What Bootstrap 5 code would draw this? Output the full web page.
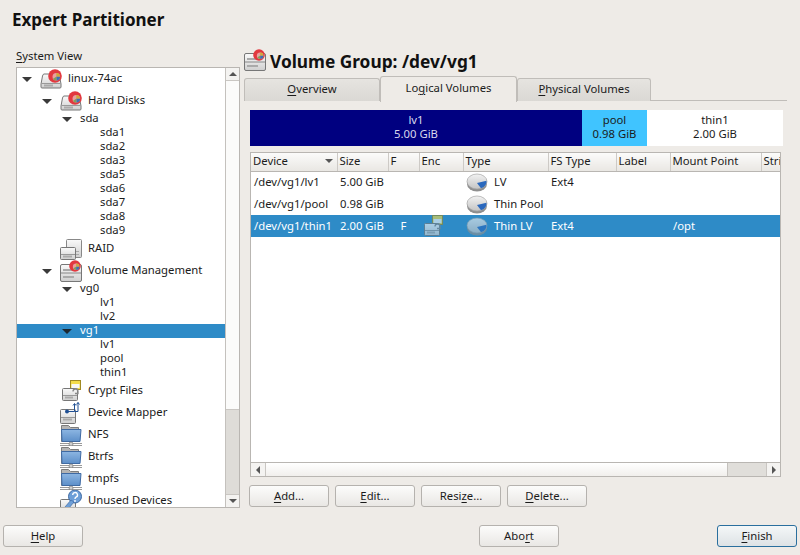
<!DOCTYPE html>
<html>

<head>
  <link href="https://cdn.jsdelivr.net/npm/bootstrap@5.3.2/dist/css/bootstrap.min.css" rel="stylesheet" type="text/css" />
  <style>
    html, body { height: 555px; overflow: hidden; }
    body { background: #eeebe7; color: #1b1b1b; font-family: "Noto Sans", "Liberation Sans", sans-serif; font-size: 11.3px; line-height: 14px; }
    u { text-underline-offset: 2px; text-decoration-thickness: 1px; }
    .page { height: 555px; }
    .app-title { font-size: 17px; font-weight: 700; line-height: 20px; color: #111; padding: 10px 0 0 12px; height: 47px; }
    .work { height: 471px; padding-left: 16px; gap: 4px; }
    .left-side { width: 224px; }
    .view-label { height: 20px; padding-top: 2px; }
    .tree-box { height: 441px; background: #fff; border: 1px solid #b9b6b2; overflow: hidden; }
    .tree-list { flex: 1; overflow: hidden; }
    .t-row { display: flex; align-items: center; flex-shrink: 0; }
    .t-label { margin-bottom: 2px; }
    .t-text { height: 14px; }
    .t-icon { height: 22px; }
    .t-sel { background: #2e8bc7; color: #fff; }
    .l0 { padding-left: 3px; }
    .l1 { padding-left: 23px; }
    .l2 { padding-left: 43px; }
    .l3 { padding-left: 83px; }
    .slot { width: 20px; flex-shrink: 0; padding-left: 2px; }
    .tri { display: block; width: 0; height: 0; border-left: 5px solid transparent; border-right: 5px solid transparent; border-top: 5px solid #3a3a3a; }
    .t-sel .tri { border-top-color: #1c2730; }
    .ico { width: 22px; height: 22px; flex-shrink: 0; margin-right: 6px; overflow: visible; }
    .v-bar { width: 14px; border-left: 1px solid #c4c1bd; background: #dedcd8; }
    .bar-btn { height: 13px; background: #f4f3f1; display: flex; align-items: center; justify-content: center; border-bottom: 1px solid #c9c6c2; }
    .bar-btn-b { border-bottom: 0; border-top: 1px solid #c9c6c2; }
    .v-thumb { height: 329px; background: #fbfbfa; border-bottom: 1px solid #c9c6c2; }
    .tri-up { width: 0; height: 0; border-left: 4px solid transparent; border-right: 4px solid transparent; border-bottom: 4px solid #555; }
    .tri-down { width: 0; height: 0; border-left: 4px solid transparent; border-right: 4px solid transparent; border-top: 4px solid #555; }
    .tri-left { width: 0; height: 0; border-top: 4px solid transparent; border-bottom: 4px solid transparent; border-right: 4px solid #555; }
    .tri-right { width: 0; height: 0; border-top: 4px solid transparent; border-bottom: 4px solid transparent; border-left: 4px solid #555; }
    .right-side { width: 543px; }
    .vg-head { height: 29px; }
    .vg-icon { width: 22px; height: 22px; margin: 0 4px 3px 0; overflow: visible; }
    .vg-title { font-size: 17.300px; font-weight: 700; line-height: 22px; color: #111; }
    .tab-strip { height: 25px; border-bottom: 1px solid #c0bdb9; align-items: flex-end; --bs-nav-tabs-border-width: 0; }
    .tab-strip .nav-link { display: block; height: 23px; margin-bottom: 0; padding: 3px 0 0; text-align: center; color: #1b1b1b; font-size: 11.3px; line-height: 14px; background: linear-gradient(#e6e4e0, #dad8d4); border: 1px solid #c0bdb9; border-bottom: 0; border-left-width: 1px; border-radius: 3px 3px 0 0; }
    .tab-strip .nav-link.active { height: 26px; margin-bottom: -1px; padding-top: 4px; background: #eeebe7; color: #1b1b1b; border: 1px solid #c0bdb9; border-bottom: 0; }
    .tw1 { width: 136px; }
    .tw2 { width: 137px; }
    .tw3 { width: 134px; }
    .size-map { height: 36px; margin: 9px 4px 0 6px; width: 533px; text-align: center; }
    .seg-lv1 { width: 332px; background: #000080; color: #d9d9ec; }
    .seg-pool { width: 65px; background: #40c4ff; }
    .seg-thin { width: 136px; background: #fff; }
    .seg-in { padding-top: 3px; }
    .list-frame { width: 531px; height: 325px; margin: 6px 0 0 6px; background: #fff; border: 1px solid #b9b6b2; }
    .list-scroll { flex: 1; overflow: hidden; }
    .vol-table { width: 620px; table-layout: fixed; margin: 0; --bs-table-bg: transparent; --bs-table-color: #1b1b1b; font-size: 11.3px; }
    .vol-table > thead > tr > th { height: 18px; padding: 0 0 1px 2px; font-weight: 400; line-height: 14px; vertical-align: middle; background: linear-gradient(#fbfbfa, #e9e7e3); border-right: 1px solid #cdcac6; border-bottom: 1px solid #b9b6b2; box-shadow: none; }
    .vol-table > tbody > tr > td { height: 22px; padding: 0 0 1px 3px; vertical-align: middle; border: 0; white-space: nowrap; overflow: visible; box-shadow: none; }
    .vol-table > tbody > tr > td.cell-flag { padding: 0 0 1px; }
    .vol-table > tbody > tr.row-sel > td { background: #2e8bc7; color: #fff; }
    .row-sel svg { opacity: .62; }
    .sort-tri { width: 0; height: 0; border-left: 4px solid transparent; border-right: 4px solid transparent; border-top: 4px solid #555; margin-right: 4px; }
    .cell-ico { width: 22px; height: 22px; margin: -1px 6px -1px 0; flex-shrink: 0; overflow: visible; }
    .h-bar { height: 14px; border-top: 1px solid #b9b6b2; background: #e0deda; }
    .h-btn { width: 15px; background: #f4f3f1; display: flex; align-items: center; justify-content: center; }
    .h-btn-l { border-right: 1px solid #c9c6c2; }
    .h-btn-r { width: 14px; border-left: 1px solid #c9c6c2; }
    .h-thumb { width: 462px; background: linear-gradient(#fff, #f1efec); border-right: 1px solid #c4c1bd; }
    .act-row { margin: 8px 0 0 5px; gap: 6px; }
    .kde-btn { width: 80px; height: 22px; padding: 0 0 2px; font-size: 11.3px; line-height: 17px; color: #1b1b1b; background: linear-gradient(#fcfcfb, #e9e7e4); border: 1px solid #b5b2ae; border-radius: 3px; }
    .finish-btn { background: linear-gradient(#f4f7f8, #dde2e5); border-color: #2a6f9e; }
    .foot { height: 22px; margin-top: 7px; padding: 0 3px; }
    .abort-wrap { margin-right: 158px; }
  </style>
</head>

<body>
  <svg width="0" height="0" class="position-absolute">
    <defs>
      <linearGradient id="gDrive" x1="0" y1="0" x2="0" y2="1"><stop offset="0" stop-color="#fafafa" /><stop offset="1" stop-color="#cfcfcf" /></linearGradient>
      <linearGradient id="gFold" x1="0" y1="0" x2="0" y2="1"><stop offset="0" stop-color="#8db6e2" /><stop offset="1" stop-color="#5d8fc9" /></linearGradient>
      <linearGradient id="gPie" x1="0" y1="0" x2="0" y2="1"><stop offset="0" stop-color="#f2f2f2" /><stop offset="1" stop-color="#c4c4c4" /></linearGradient>
      <symbol id="badge" viewBox="0 0 14 14">
        <circle cx="7" cy="7" r="6.800" fill="#e2383f" />
        <circle cx="8.300" cy="7.800" r="3.800" fill="#e8a0a0" />
        <path d="M8.300 7.800V4a3.800 3.800 0 0 1 3.800 3.800z" fill="#d0a93a" />
        <path d="M8.300 7.800h3.800a3.800 3.800 0 0 1-3.800 3.800z" fill="#3f6fb5" />
        <path d="M8.300 7.800v3.800a3.800 3.800 0 0 1-3.300-1.900z" fill="#7fa35a" />
      </symbol>
      <symbol id="i-disk" viewBox="0 0 22 22">
        <path d="M4 6h14q1 0 1.500 2L21 16v3q0 1-1 1H2q-1 0-1-1v-3L2.500 8Q3 6 4 6z" fill="url(#gDrive)" stroke="#777" />
        <path d="M1.500 15.500h19" stroke="#999" />
        <path d="M4 17.500h9" stroke="#aaa" stroke-width="2" />
        <use href="#badge" x="8" y="1" width="14" height="14" />
      </symbol>
      <symbol id="i-raid" viewBox="0 0 22 22">
        <rect x="6.500" y="1.500" width="15" height="18" rx="1" fill="url(#gDrive)" stroke="#888" />
        <path d="M9 13.500h10M9 16.500h10" stroke="#aaa" />
        <rect x=".5" y="9.500" width="15" height="12" rx="1" fill="url(#gDrive)" stroke="#777" />
        <path d="M1 16.500h14" stroke="#999" />
        <path d="M3 18.500h9" stroke="#aaa" stroke-width="2" />
      </symbol>
      <symbol id="i-vol" viewBox="0 0 22 22">
        <rect x=".5" y="4.500" width="21" height="17" rx="1.500" fill="url(#gDrive)" stroke="#777" />
        <path d="M1 13h20" stroke="#888" />
        <path d="M3 10h11M3 17h11" stroke="#aaa" stroke-width="2" />
        <use href="#badge" x="9" y="0" width="12" height="12" />
      </symbol>
      <symbol id="i-crypt" viewBox="0 0 22 22">
        <rect x="10.500" y=".5" width="10" height="9" fill="#f3dc4a" stroke="#a08a22" />
        <rect x="11.500" y="4" width="8" height="4" fill="#f7f7f7" />
        <rect x="2.500" y="8.500" width="15" height="12" rx="1" fill="url(#gDrive)" stroke="#777" />
        <path d="M3 15.500h14" stroke="#999" />
        <path d="M5 17.500h8" stroke="#aaa" stroke-width="2" />
        <path d="M13 11.500a2.500 2.500 0 0 1 5 0v2h-3" fill="none" stroke="#888" stroke-width="1.300" />
      </symbol>
      <symbol id="i-dm" viewBox="0 0 22 22">
        <rect x=".5" y="7.500" width="15" height="14" rx="1" fill="url(#gDrive)" stroke="#777" />
        <path d="M1 15.500h14" stroke="#999" />
        <path d="M3 17.500h9" stroke="#aaa" stroke-width="2" />
        <circle cx="7" cy="9.500" r="2" fill="#1f4f93" />
        <path d="M7 9.500h7.500V2M14.500 9.500h3.500V.5M13 3.500l1.500-2 1.500 2M16.500 2.500l1.500-2 1.500 2" fill="none" stroke="#1f4f93" />
      </symbol>
      <symbol id="i-folder" viewBox="0 0 22 22">
        <path d="M1.500 1.500h7l2 2h8v14h-17z" fill="#b4b4b4" stroke="#7d7d7d" />
        <path d="M1.500 5.500h19.500l-1 12h-18z" fill="url(#gFold)" stroke="#3f6aa3" />
        <path d="M0 19.500h22M0 21.500h22" stroke="#9a9a9a" />
        <circle cx="11" cy="20" r="2" fill="#cfcfcf" stroke="#777" stroke-width=".7" />
      </symbol>
      <symbol id="i-unused" viewBox="0 0 22 22">
        <rect x=".5" y="9.500" width="15" height="14" rx="1" fill="url(#gDrive)" stroke="#777" />
        <circle cx="15" cy="6.500" r="6.500" fill="#6d9fd8" stroke="#3f6aa3" />
        <path d="M11 10l-6 7 1 2 3-1 5-6z" fill="#6d9fd8" stroke="#3f6aa3" stroke-width=".7" />
        <path d="M12.700 5a2.400 2.400 0 1 1 3.300 2.200q-1 .5-1 1.800" fill="none" stroke="#fff" stroke-width="1.400" />
        <circle cx="15" cy="11" r=".9" fill="#fff" />
      </symbol>
      <symbol id="i-pie" viewBox="0 0 22 22">
        <ellipse cx="11" cy="13" rx="10" ry="7.500" fill="#8f8f8f" />
        <ellipse cx="11" cy="10.500" rx="10" ry="7.500" fill="url(#gPie)" stroke="#a5a5a5" stroke-width=".7" />
        <path d="M11 12l9.500-2.300a10 7.500 0 0 1-5.500 7.500z" fill="#2a68bd" />
      </symbol>
    </defs>
  </svg>

  <div class="page d-flex flex-column">
    <h1 class="app-title mb-0">Expert Partitioner</h1>

    <div class="work d-flex">
      <div class="left-side d-flex flex-column">
        <div class="view-label"><u>S</u>ystem View</div>
        <div class="tree-box d-flex">
          <div class="tree-list" id="treeList"></div>
          <div class="v-bar d-flex flex-column">
            <div class="bar-btn"><span class="tri-up"></span></div>
            <div class="v-thumb"></div>
            <div class="flex-grow-1"></div>
            <div class="bar-btn bar-btn-b"><span class="tri-down"></span></div>
          </div>
        </div>
      </div>

      <div class="right-side d-flex flex-column">
        <div class="vg-head d-flex align-items-center">
          <svg class="vg-icon"><use href="#i-vol" /></svg>
          <span class="vg-title">Volume Group: /dev/vg1</span>
        </div>
        <ul class="nav nav-tabs tab-strip">
          <li class="nav-item"><a class="nav-link tw1" href="#"><u>O</u>verview</a></li>
          <li class="nav-item"><a class="nav-link tw2 active" href="#">Lo<u>g</u>ical Volumes</a></li>
          <li class="nav-item"><a class="nav-link tw3" href="#"><u>P</u>hysical Volumes</a></li>
        </ul>

        <div class="size-map d-flex">
          <div class="seg-lv1 seg-in">lv1<br>5.00 GiB</div>
          <div class="seg-pool seg-in">pool<br>0.98 GiB</div>
          <div class="seg-thin seg-in">thin1<br>2.00 GiB</div>
        </div>

        <div class="list-frame d-flex flex-column">
          <div class="list-scroll">
            <table class="table vol-table">
              <colgroup>
                <col style="width: 86px"><col style="width: 51px"><col style="width: 31px"><col style="width: 44px"><col style="width: 85px"><col style="width: 68px"><col style="width: 54px"><col style="width: 91px"><col style="width: 110px">
              </colgroup>
              <thead>
                <tr>
                  <th><div class="d-flex justify-content-between align-items-center">Device<span class="sort-tri"></span></div></th>
                  <th>Size</th><th>F</th><th>Enc</th><th>Type</th><th>FS Type</th><th>Label</th><th>Mount Point</th><th>Stripes</th>
                </tr>
              </thead>
              <tbody>
                <tr>
                  <td>/dev/vg1/lv1</td><td>5.00 GiB</td><td></td><td></td>
                  <td><div class="d-flex align-items-center"><svg class="cell-ico"><use href="#i-pie" /></svg>LV</div></td>
                  <td>Ext4</td><td></td><td></td><td></td>
                </tr>
                <tr>
                  <td>/dev/vg1/pool</td><td>0.98 GiB</td><td></td><td></td>
                  <td><div class="d-flex align-items-center"><svg class="cell-ico"><use href="#i-pie" /></svg>Thin Pool</div></td>
                  <td></td><td></td><td></td><td></td>
                </tr>
                <tr class="row-sel">
                  <td>/dev/vg1/thin1</td><td>2.00 GiB</td><td class="text-center cell-flag">F</td>
                  <td><div class="d-flex align-items-center"><svg class="cell-ico"><use href="#i-crypt" /></svg></div></td>
                  <td><div class="d-flex align-items-center"><svg class="cell-ico"><use href="#i-pie" /></svg>Thin LV</div></td>
                  <td>Ext4</td><td></td><td>/opt</td><td></td>
                </tr>
              </tbody>
            </table>
          </div>
          <div class="h-bar d-flex">
            <div class="h-btn h-btn-l"><span class="tri-left"></span></div>
            <div class="h-thumb"></div>
            <div class="flex-grow-1"></div>
            <div class="h-btn h-btn-r"><span class="tri-right"></span></div>
          </div>
        </div>

        <div class="act-row d-flex">
          <button type="button" class="btn kde-btn"><u>A</u>dd...</button>
          <button type="button" class="btn kde-btn"><u>E</u>dit...</button>
          <button type="button" class="btn kde-btn">Resi<u>z</u>e...</button>
          <button type="button" class="btn kde-btn"><u>D</u>elete...</button>
        </div>
      </div>
    </div>

    <div class="foot d-flex">
      <button type="button" class="btn kde-btn"><u>H</u>elp</button>
      <div class="ms-auto abort-wrap"><button type="button" class="btn kde-btn">Abo<u>r</u>t</button></div>
      <button type="button" class="btn kde-btn finish-btn"><u>F</u>inish</button>
    </div>
  </div>

  <script src="https://cdn.jsdelivr.net/npm/bootstrap@5.3.2/dist/js/bootstrap.bundle.min.js"></script>
  <script>
    const treeList = document.querySelector("#treeList")
    const treeItems = [
      [0, "linux-74ac", "i-disk", true],
      [1, "Hard Disks", "i-disk", true],
      [2, "sda", "", true],
      [3, "sda1"], [3, "sda2"], [3, "sda3"], [3, "sda5"], [3, "sda6"], [3, "sda7"], [3, "sda8"], [3, "sda9"],
      [1, "RAID", "i-raid"],
      [1, "Volume Management", "i-vol", true],
      [2, "vg0", "", true],
      [3, "lv1"], [3, "lv2"],
      [2, "vg1", "", true, true],
      [3, "lv1"], [3, "pool"], [3, "thin1"],
      [1, "Crypt Files", "i-crypt"],
      [1, "Device Mapper", "i-dm"],
      [1, "NFS", "i-folder"],
      [1, "Btrfs", "i-folder"],
      [1, "tmpfs", "i-folder"],
      [1, "Unused Devices", "i-unused"]
    ]

    for (let i = 0; i < treeItems.length; i++) {
      const [level, name, icon, open, selected] = treeItems[i]
      const row = document.createElement("div")
      row.className = `t-row l${level} ${icon ? "t-icon" : "t-text"} ${selected ? "t-sel" : ""}`
      const arrow = open ? '<span class="tri"></span>' : ""
      const pic = icon ? `<svg class="ico"><use href="#${icon}" /></svg>` : ""
      const slot = level === 3 ? "" : `<span class="slot">${arrow}</span>`
      row.innerHTML = `${slot}${pic}<span class="t-label">${name}</span>`
      treeList.appendChild(row)
    }
  </script>
</body>

</html>
